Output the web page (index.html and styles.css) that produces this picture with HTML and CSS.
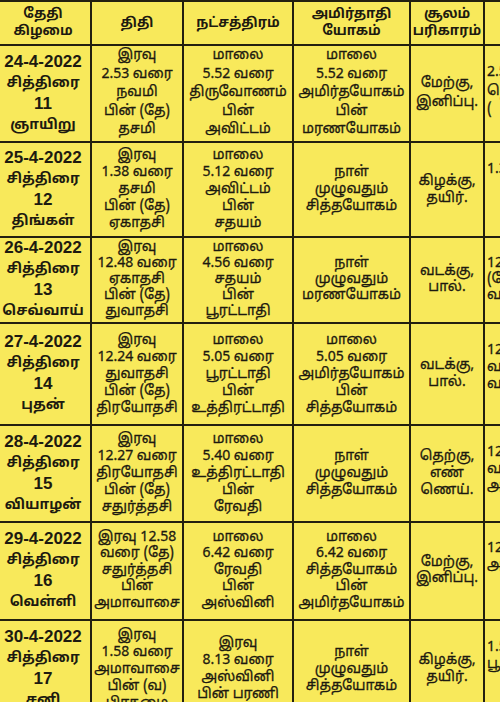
FILE: index.html
```html
<!DOCTYPE html>
<html lang="ta">
<head>
<meta charset="utf-8">
<link rel="stylesheet" href="styles.css">
</head>
<body>
<div class="page">
<table class="panchang">
  <colgroup>
    <col class="c-date"><col class="c-thithi"><col class="c-star"><col class="c-yogam"><col class="c-soolam"><col class="c-extra">
  </colgroup>
  <thead>
    <tr class="head">
      <th>தேதி<br>கிழமை</th>
      <th>திதி</th>
      <th>நட்சத்திரம்</th>
      <th>அமிர்தாதி<br>யோகம்</th>
      <th>சூலம்<br>பரிகாரம்</th>
      <th class="cut">நேத்திரம்</th>
    </tr>
  </thead>
  <tbody>
    <tr class="r1">
      <td class="date"><span class="num">24-4-2022</span><br>சித்திரை<br><span class="num">11</span><br>ஞாயிறு</td>
      <td>இரவு<br>2.53 வரை<br>நவமி<br>பின் (தே)<br>தசமி</td>
      <td>மாலை<br>5.52 வரை<br>திருவோணம்<br>பின்<br>அவிட்டம்</td>
      <td>மாலை<br>5.52 வரை<br>அமிர்தயோகம்<br>பின்<br>மரணயோகம்</td>
      <td>மேற்கு,<br>இனிப்பு.</td>
      <td class="cut">2.53<br>நெல்லை<br>(</td>
    </tr>
    <tr class="r2">
      <td class="date"><span class="num">25-4-2022</span><br>சித்திரை<br><span class="num">12</span><br>திங்கள்</td>
      <td>இரவு<br>1.38 வரை<br>தசமி<br>பின் (தே)<br>ஏகாதசி</td>
      <td>மாலை<br>5.12 வரை<br>அவிட்டம்<br>பின்<br>சதயம்</td>
      <td>நாள்<br>முழுவதும்<br>சித்தயோகம்</td>
      <td>கிழக்கு,<br>தயிர்.</td>
      <td class="cut">1.38</td>
    </tr>
    <tr class="r3">
      <td class="date"><span class="num">26-4-2022</span><br>சித்திரை<br><span class="num">13</span><br>செவ்வாய்</td>
      <td>இரவு<br>12.48 வரை<br>ஏகாதசி<br>பின் (தே)<br>துவாதசி</td>
      <td>மாலை<br>4.56 வரை<br>சதயம்<br>பின்<br>பூரட்டாதி</td>
      <td>நாள்<br>முழுவதும்<br>மரணயோகம்</td>
      <td>வடக்கு,<br>பால்.</td>
      <td class="cut">12.48<br>(தே)<br>வரை</td>
    </tr>
    <tr class="r4">
      <td class="date"><span class="num">27-4-2022</span><br>சித்திரை<br><span class="num">14</span><br>புதன்</td>
      <td>இரவு<br>12.24 வரை<br>துவாதசி<br>பின் (தே)<br>திரயோதசி</td>
      <td>மாலை<br>5.05 வரை<br>பூரட்டாதி<br>பின்<br>உத்திரட்டாதி</td>
      <td>மாலை<br>5.05 வரை<br>அமிர்தயோகம்<br>பின்<br>சித்தயோகம்</td>
      <td>வடக்கு,<br>பால்.</td>
      <td class="cut">12.24<br>வரை<br>வரை</td>
    </tr>
    <tr class="r5">
      <td class="date"><span class="num">28-4-2022</span><br>சித்திரை<br><span class="num">15</span><br>வியாழன்</td>
      <td>இரவு<br>12.27 வரை<br>திரயோதசி<br>பின் (தே)<br>சதுர்த்தசி</td>
      <td>மாலை<br>5.40 வரை<br>உத்திரட்டாதி<br>பின்<br>ரேவதி</td>
      <td>நாள்<br>முழுவதும்<br>சித்தயோகம்</td>
      <td>தெற்கு,<br>எண்<br>ணெய்.</td>
      <td class="cut">12.27<br>வரை<br>அ</td>
    </tr>
    <tr class="r6">
      <td class="date"><span class="num">29-4-2022</span><br>சித்திரை<br><span class="num">16</span><br>வெள்ளி</td>
      <td>இரவு 12.58<br>வரை (தே)<br>சதுர்த்தசி<br>பின்<br>அமாவாசை</td>
      <td>மாலை<br>6.42 வரை<br>ரேவதி<br>பின்<br>அஸ்வினி</td>
      <td>மாலை<br>6.42 வரை<br>சித்தயோகம்<br>பின்<br>அமிர்தயோகம்</td>
      <td>மேற்கு,<br>இனிப்பு.</td>
      <td class="cut">12.58<br>அ</td>
    </tr>
    <tr class="r7">
      <td class="date"><span class="num">30-4-2022</span><br>சித்திரை<br><span class="num">17</span><br>சனி</td>
      <td>இரவு<br>1.58 வரை<br>அமாவாசை<br>பின் (வ)<br>பிரதமை</td>
      <td>இரவு<br>8.13 வரை<br>அஸ்வினி<br>பின் பரணி</td>
      <td>நாள்<br>முழுவதும்<br>சித்தயோகம்</td>
      <td>கிழக்கு,<br>தயிர்.</td>
      <td class="cut">1.58<br>பூ</td>
    </tr>
  </tbody>
</table>
</div>
</body>
</html>
```

FILE: styles.css
```css
html, body {
  margin: 0;
  padding: 0;
  background: #f8e95b;
}
body {
  width: 500px;
  height: 702px;
  overflow: hidden;
}
.page {
  width: 500px;
  height: 702px;
  overflow: hidden;
}
.panchang {
  margin-left: -6px;
  border-collapse: collapse;
  table-layout: fixed;
  width: 596px;
  font-family: "Noto Sans Tamil", "Lohit Tamil", "Noto Sans", "DejaVu Sans", sans-serif;
  color: #1d1a10;
  font-size: 14px;
  line-height: 17px;
  -webkit-text-stroke: 0.3px #1d1a10;
}
.c-date { width: 96px; }
.c-thithi { width: 92px; }
.c-star { width: 110px; }
.c-yogam { width: 117px; }
.c-soolam { width: 74px; }
.c-extra { width: 107px; }
.panchang th,
.panchang td {
  border: 2px solid #23200f;
  text-align: center;
  vertical-align: middle;
  padding: 0;
  white-space: nowrap;
  overflow: hidden;
}
.panchang th {
  font-weight: 700;
  font-size: 13.5px;
  line-height: 17px;
  -webkit-text-stroke: 0;
}
.panchang td.date {
  font-weight: 700;
  font-size: 14px;
  line-height: 20px;
  -webkit-text-stroke: 0;
}
.panchang .num {
  font-family: "Liberation Sans", Arial, sans-serif;
  font-size: 17px;
}
.panchang td.cut {
  text-align: left;
  vertical-align: top;
  padding-top: 18px;
  padding-left: 2px;
}
.head { height: 44px; }
.r1 { height: 97px; line-height: 18.5px; }
.r2 { height: 95px; }
.r3 { height: 86px; line-height: 16px; }
.r4 { height: 102px; }
.r5 { height: 97px; }
.r6 { height: 98px; line-height: 16.5px; }
.r7 { height: 98px; }
```
